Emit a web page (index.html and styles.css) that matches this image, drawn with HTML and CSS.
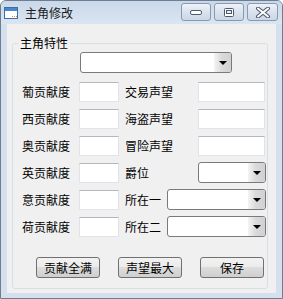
FILE: index.html
```html
<!DOCTYPE html>
<html lang="zh-CN">
<head>
    <meta charset="UTF-8">
    <title>主角修改</title>
    <link rel="stylesheet" href="styles.css">
</head>
<body>
    <div class="window">
        <div class="titlebar">
            <svg class="app-icon" width="14" height="12" viewBox="0 0 14 12">
                <rect x="0.5" y="0.5" width="13" height="11" fill="#fff" stroke="#3b6ea8"/>
                <rect x="1" y="1" width="12" height="3" fill="#4a86c8"/>
                <rect x="8" y="9" width="1" height="1" fill="#e08a1e"/>
                <rect x="10" y="9" width="1" height="1" fill="#e08a1e"/>
                <rect x="12" y="9" width="1" height="1" fill="#e08a1e"/>
            </svg>
            <span class="title">主角修改</span>
            <div class="caption-buttons">
                <div class="cap-btn">
                    <svg width="14" height="8" viewBox="0 0 14 8">
                        <rect x="1.5" y="2.5" width="11" height="4" rx="1.5" fill="#fff" stroke="#4d5a6c"/>
                    </svg>
                </div>
                <div class="cap-btn">
                    <svg width="14" height="11" viewBox="0 0 14 11">
                        <rect x="2.5" y="1.5" width="9" height="8" rx="1" fill="#fff" stroke="#4d5a6c"/>
                        <rect x="4.5" y="3.5" width="5" height="3" fill="#e6ecf4" stroke="#4d5a6c"/>
                    </svg>
                </div>
                <div class="cap-btn">
                    <svg width="16" height="11" viewBox="0 0 16 11">
                        <path d="M3 1.5 L13 9.5 M13 1.5 L3 9.5" stroke="#4d5a6c" stroke-width="4" stroke-linecap="round"/>
                        <path d="M3 1.5 L13 9.5 M13 1.5 L3 9.5" stroke="#fff" stroke-width="2" stroke-linecap="round"/>
                    </svg>
                </div>
            </div>
        </div>

        <div class="client">
            <fieldset class="group">
                <legend>主角特性</legend>
                <div class="combo combo-top"><span class="combo-arrow"></span></div>

                <div class="form-grid">
                    <span class="lbl">葡贡献度</span>
                    <div class="field"></div>
                    <span class="rlbl">交易声望</span>
                    <div class="field field-wide"></div>

                    <span class="lbl">西贡献度</span>
                    <div class="field"></div>
                    <span class="rlbl">海盗声望</span>
                    <div class="field field-wide"></div>

                    <span class="lbl">奥贡献度</span>
                    <div class="field"></div>
                    <span class="rlbl">冒险声望</span>
                    <div class="field field-wide"></div>

                    <span class="lbl">英贡献度</span>
                    <div class="field"></div>
                    <span class="rlbl">爵位</span>
                    <div class="combo combo-small"><span class="combo-arrow"></span></div>

                    <span class="lbl">意贡献度</span>
                    <div class="field"></div>
                    <span class="rlbl-short">所在一</span>
                    <div class="combo combo-long"><span class="combo-arrow"></span></div>

                    <span class="lbl">荷贡献度</span>
                    <div class="field"></div>
                    <span class="rlbl-short">所在二</span>
                    <div class="combo combo-long"><span class="combo-arrow"></span></div>
                </div>

                <div class="actions">
                    <button class="btn">贡献全满</button>
                    <button class="btn">声望最大</button>
                    <button class="btn">保存</button>
                </div>
            </fieldset>
        </div>
    </div>
</body>
</html>
```

FILE: styles.css
```css
* {
    box-sizing: border-box;
}

body {
    margin: 0;
    font-family: "Noto Sans CJK SC", "Microsoft YaHei", sans-serif;
    font-size: 12px;
    color: #000;
    background-color: #fff;
}

.window {
    width: 283px;
    height: 299px;
    border: 1px solid #6e7d90;
    border-radius: 6px 6px 0 0;
    background-color: #d5e0ee;
    display: flex;
    flex-direction: column;
}

.titlebar {
    height: 23px;
    display: flex;
    align-items: center;
    padding: 0 4px 0 3px;
    background: linear-gradient(#c9d8ea, #dbe5f2);
    border-radius: 5px 5px 0 0;
}

.app-icon {
    flex: none;
    margin-top: 1px;
}

.title {
    margin-left: 7px;
    line-height: 14px;
    color: #1a1a1a;
}

.caption-buttons {
    margin-left: auto;
    align-self: flex-start;
    margin-top: 2px;
    display: flex;
    gap: 3px;
}

.cap-btn {
    width: 30px;
    height: 18px;
    border: 1px solid #8a99ae;
    border-radius: 3px;
    background: linear-gradient(#eef2f8, #d9e2ee 50%, #ccd7e6);
    display: flex;
    align-items: center;
    justify-content: center;
}

.cap-btn:last-child {
    width: 31px;
}

.client {
    flex: 1;
    margin: 0 6px 5px;
    padding: 12px 8px 4px 5px;
    background-color: #f0f0f0;
    display: flex;
    flex-direction: column;
}

.group {
    flex: 1;
    margin: 0;
    padding: 0;
    min-width: 0;
    border: 1px solid #d5dfe5;
    border-radius: 3px;
}

.group legend {
    margin-left: 5px;
    padding: 0 2px;
    line-height: 14px;
}

.combo {
    height: 21px;
    border: 1px solid #7a7a7a;
    border-radius: 3px;
    background-color: #fff;
    display: flex;
    justify-content: flex-end;
}

.combo-top {
    width: 152px;
    margin: 2px 0 0 67px;
}

.combo-arrow {
    width: 17px;
    height: 100%;
    border-radius: 0 2px 2px 0;
    background: linear-gradient(to right, #f4f4f4, #dadada 45%, #d0d0d0);
    display: flex;
    align-items: center;
    justify-content: center;
}

.combo-arrow::after {
    content: "";
    border-left: 4px solid transparent;
    border-right: 4px solid transparent;
    border-top: 4px solid #000;
    margin-top: 1px;
}

.form-grid {
    display: grid;
    grid-template-columns: 57px 40px 6px 42px 31px 68px;
    grid-auto-rows: 27px;
    align-items: center;
    margin-top: 5px;
    padding-left: 9px;
}

.lbl {
    grid-column: 1;
    line-height: 14px;
}

.rlbl {
    grid-column: 4 / span 2;
    line-height: 14px;
}

.rlbl-short {
    grid-column: 4;
    line-height: 14px;
}

.field {
    grid-column: 2;
    height: 20px;
    border: 1px solid #e2e3ea;
    border-top-color: #b4b7bf;
    background-color: #fff;
}

.field-wide {
    grid-column: 6;
    width: 67px;
}

.combo-small {
    grid-column: 6;
}

.combo-long {
    grid-column: 5 / span 2;
}

.actions {
    display: flex;
    gap: 18px;
    padding-left: 23px;
    margin-top: 17px;
}

.btn {
    width: 64px;
    height: 21px;
    padding: 0;
    border: 1px solid #707070;
    border-radius: 3px;
    background: linear-gradient(#f2f2f2, #ebebeb 50%, #dddddd 50%, #cfcfcf);
    font-family: inherit;
    font-size: 12px;
    color: #000;
}
```
